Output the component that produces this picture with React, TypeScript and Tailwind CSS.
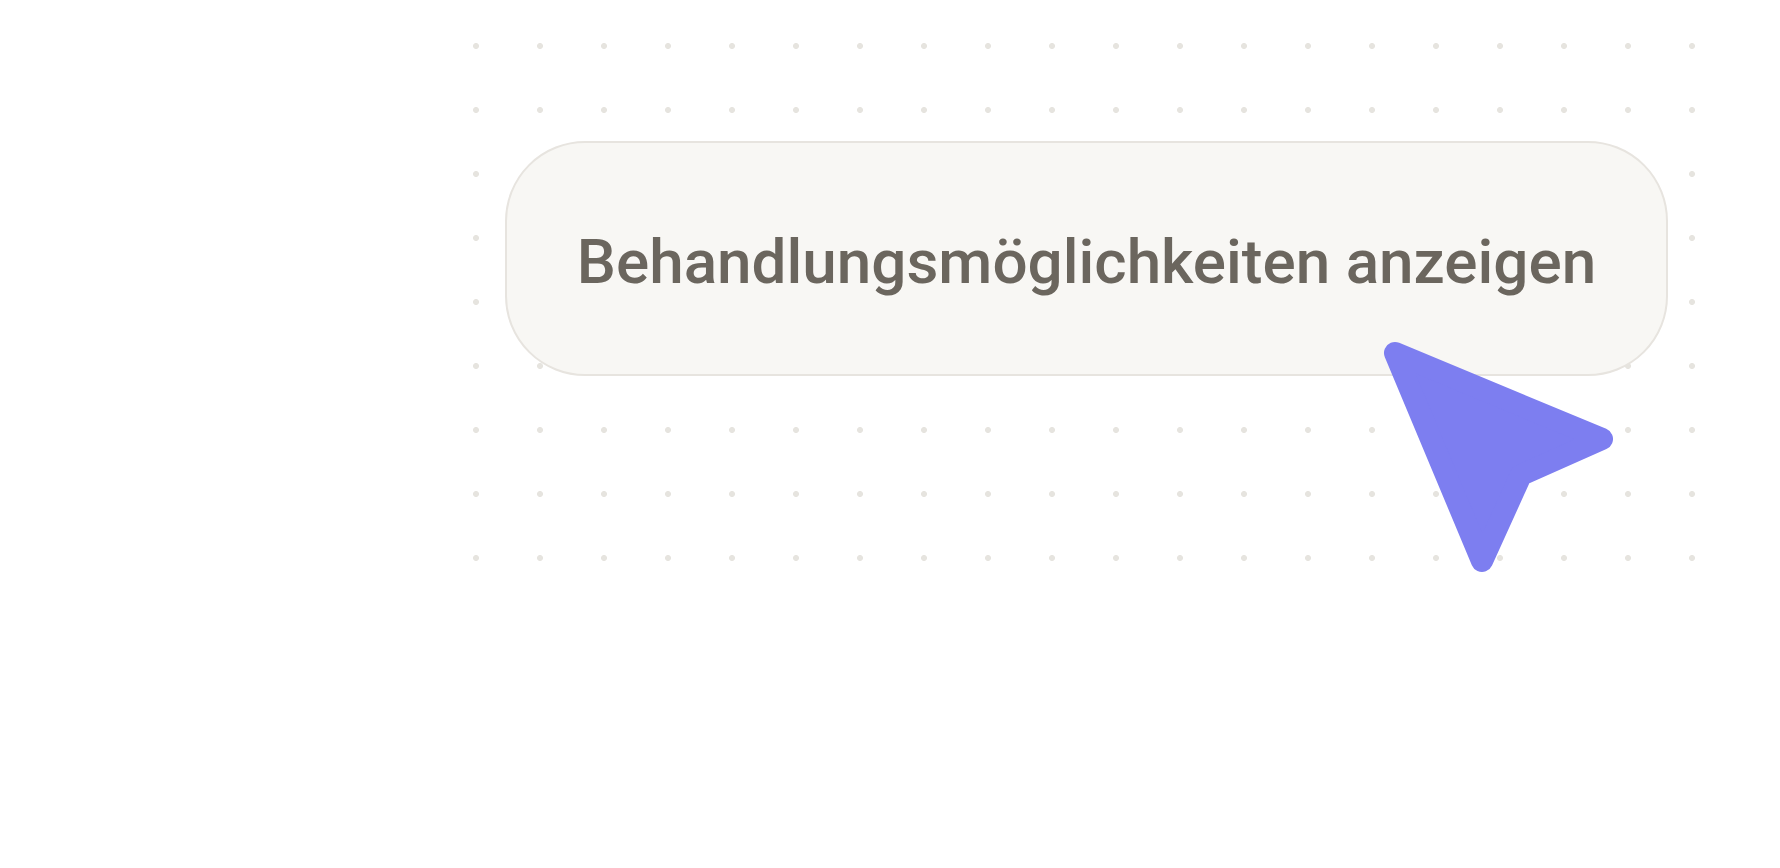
export default function App() {
  return (
    <div className="min-h-[868px] w-full bg-white pl-[444px] pt-[14px]">
      <div className="relative h-[576px] w-[1280px] bg-[radial-gradient(circle,#e6e4df_2.6px,transparent_3.4px)] bg-[length:64px_64px]">
        <div className="pl-[61px] pt-[127px]">
          <button
            type="button"
            className="flex h-[235px] w-[1163px] items-center justify-center rounded-[80px] border-2 border-[#e7e4df] bg-[#f8f7f4] pt-[6px] font-['Roboto',sans-serif] text-[62px] font-medium text-[#6b665e]"
          >
            Behandlungsmöglichkeiten anzeigen
          </button>
        </div>
        {/* pointer arrow resting on the button corner */}
        <svg
          className="absolute left-[936px] top-[321px]"
          width="250"
          height="250"
          viewBox="0 0 250 250"
        >
          <polygon
            points="15,18 222,104 141,140 102,226"
            fill="#7d7ef0"
            stroke="#7d7ef0"
            strokeWidth="22"
            strokeLinejoin="round"
          />
        </svg>
      </div>
    </div>
  );
}
